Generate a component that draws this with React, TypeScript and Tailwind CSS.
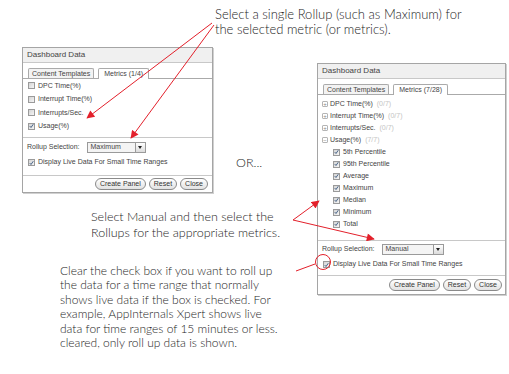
import React from 'react';

const Check = () => (
  <svg width="6" height="6" viewBox="0 0 7 7" className="block">
    <path d="M1 3.6 L2.8 5.6 L6 1" fill="none" stroke="#3d5a80" strokeWidth="1.3" />
  </svg>
);

const Box = ({ checked }: { checked?: boolean }) => (
  <span className="inline-flex items-center justify-center w-[7px] h-[7px] border border-[#9a9a9a] bg-gradient-to-br from-[#d4d4d4] to-[#f5f5f5] shrink-0">
    {checked && <Check />}
  </span>
);

const Toggle = ({ open }: { open?: boolean }) => (
  <span className="inline-flex items-center justify-center w-[6px] h-[6px] rounded-[1px] border border-[#b5b5b5] text-[6px] leading-none text-[#888] shrink-0">
    {open ? '−' : '+'}
  </span>
);

const Pill = ({ label }: { label: string }) => (
  <span className="px-[4px] h-[12px] leading-[10px] rounded-full border border-[#8a8a8a] bg-gradient-to-b from-white to-[#e2e2e2] text-[#333]">
    {label}
  </span>
);

const Select = ({ value, w }: { value: string; w: string }) => (
  <span className={`flex items-center justify-between h-[11px] border border-[#9a9a9a] bg-[#f4f4f4] pl-[3px] ${w}`}>
    <span>{value}</span>
    <span className="flex items-center justify-center w-[10px] h-[9px] border-l border-[#9a9a9a] bg-gradient-to-b from-white to-[#dcdcdc]">
      <span className="w-0 h-0 border-l-[2.5px] border-r-[2.5px] border-t-[3px] border-l-transparent border-r-transparent border-t-[#222]" />
    </span>
  </span>
);

const TabRow = ({ metrics }: { metrics: string }) => (
  <div className="flex items-end h-[16px] pl-[5px] border-b border-[#aaa]">
    <span className="h-[10px] leading-[9px] px-[3px] border border-b-0 border-[#aaa] rounded-t-[2px] bg-[#f3f3f3] mr-[4px]">Content Templates</span>
    <span className="h-[11px] leading-[10px] px-[5px] border border-b-0 border-[#aaa] rounded-t-[2px] bg-white mb-[-1px]">{metrics}</span>
  </div>
);

const panelText = "bg-white text-[7px] text-[#444] font-['Liberation_Sans',Arial,sans-serif] shadow-[1px_1px_0_#d0d0d0] flex flex-col border border-[#a5a5a5]";

const LeftPanel = () => (
  <div className={`absolute left-[22px] top-[47px] w-[191px] h-[146px] ${panelText}`}>
    <div className="h-[15px] bg-[#f0f0f0] border-b border-[#c8c8c8] pl-[4px] text-[8px] leading-[14px]">Dashboard Data</div>
    <TabRow metrics="Metrics (1/4)" />
    <div className="flex flex-col pl-[5px] pb-[4px]">
      {[['DPC Time(%)', false], ['Interrupt Time(%)', false], ['Interrupts/Sec.', false], ['Usage(%)', true]].map(([l, c]) => (
        <div key={l as string} className="flex items-center gap-[3px] h-[13.5px]">
          <Box checked={c as boolean} />
          <span>{l}</span>
        </div>
      ))}
    </div>
    <div className="border-t border-[#c8c8c8] flex flex-col pl-[4px] pt-[2px] pb-[5px]">
      <div className="flex items-center gap-[7px] h-[15px]">
        <span>Rollup Selection:</span>
        <Select value="Maximum" w="w-[59px]" />
      </div>
      <div className="flex items-center gap-[3px] h-[15px] pl-[1px]">
        <Box checked />
        <span>Display Live Data For Small Time Ranges</span>
      </div>
    </div>
    <div className="border-t border-[#c8c8c8] flex-1 flex items-center justify-end gap-[3px] pr-[4px]">
      <Pill label="Create Panel" />
      <Pill label="Reset" />
      <Pill label="Close" />
    </div>
  </div>
);

const subs = ['5th Percentile', '95th Percentile', 'Average', 'Maximum', 'Median', 'Minimum', 'Total'];

const RightPanel = () => (
  <div className={`absolute left-[317px] top-[63px] w-[189px] h-[232px] ${panelText}`}>
    <div className="h-[15px] bg-[#f0f0f0] border-b border-[#c8c8c8] pl-[4px] text-[8px] leading-[14px]">Dashboard Data</div>
    <TabRow metrics="Metrics (7/28)" />
    <div className="flex flex-col pl-[4px] pt-[3px] pb-[10px]">
      {['DPC Time(%)', 'Interrupt Time(%)', 'Interrupts/Sec.'].map((l) => (
        <div key={l} className="flex items-center gap-[2px] h-[12px]">
          <Toggle />
          <span>{l}</span>
          <span className="text-[#c4c4c4] ml-[2px]">(0/7)</span>
        </div>
      ))}
      <div className="flex items-center gap-[2px] h-[12px]">
        <Toggle open />
        <span>Usage(%)</span>
        <span className="text-[#c4c4c4] ml-[2px]">(7/7)</span>
      </div>
      {subs.map((l) => (
        <div key={l} className="flex items-center gap-[3px] h-[12px] pl-[11px]">
          <Box checked />
          <span>{l}</span>
        </div>
      ))}
    </div>
    <div className="border-t border-[#c8c8c8] flex flex-col pl-[4px] pt-[1px] pb-[3px]">
      <div className="flex items-center gap-[7px] h-[15px]">
        <span>Rollup Selection:</span>
        <Select value="Manual" w="w-[62px]" />
      </div>
      <div className="flex items-center gap-[3px] h-[15px] pl-[1px]">
        <Box checked />
        <span>Display Live Data For Small Time Ranges</span>
      </div>
    </div>
    <div className="border-t border-[#c8c8c8] flex-1 flex items-center justify-end gap-[3px] pr-[3px]">
      <Pill label="Create Panel" />
      <Pill label="Reset" />
      <Pill label="Close" />
    </div>
  </div>
);

const Arrows = () => (
  <svg className="absolute inset-0 pointer-events-none" width="509" height="374" viewBox="0 0 509 374">
    <defs>
      <marker id="head" viewBox="0 0 10 10" refX="9" refY="5" markerWidth="9" markerHeight="8" orient="auto">
        <path d="M0 0 L10 5 L0 10 z" fill="#e3202b" />
      </marker>
    </defs>
    <g stroke="#e3202b" strokeWidth="1" fill="none">
      <line x1="212" y1="23" x2="87" y2="118" markerEnd="url(#head)" />
      <line x1="214" y1="25" x2="131" y2="138" markerEnd="url(#head)" />
      <line x1="293" y1="220" x2="319" y2="201" markerEnd="url(#head)" />
      <line x1="293" y1="220" x2="374" y2="239" markerEnd="url(#head)" />
      <line x1="296" y1="271" x2="315" y2="264" />
      <circle cx="323" cy="262" r="7.5" />
    </g>
  </svg>
);

export default function App() {
  return (
    <div className="relative w-[509px] h-[374px] bg-white overflow-hidden font-['Lato',sans-serif] font-light text-[#1e1e1e]">
      <p className="absolute left-[215px] top-[7px] text-[13px] leading-[15px]">
        Select a single Rollup (such as Maximum) for
        <br />
        the selected metric (or metrics).
      </p>
      <LeftPanel />
      <p className="absolute left-[236px] top-[155px] text-[12.5px] leading-[16px]">OR...</p>
      <p className="absolute left-[91px] top-[209px] text-[12.5px] leading-[16px]">
        Select Manual and then select the
        <br />
        Rollups for the appropriate metrics.
      </p>
      <p className="absolute left-[60px] top-[264px] text-[12px] leading-[14.4px]">
        Clear the check box if you want to roll up
        <br />
        the data for a time range that normally
        <br />
        shows live data if the box is checked. For
        <br />
        example, AppInternals Xpert shows live
        <br />
        data for time ranges of 15 minutes or less.
        <br />
        cleared, only roll up data is shown.
      </p>
      <RightPanel />
      <Arrows />
    </div>
  );
}
